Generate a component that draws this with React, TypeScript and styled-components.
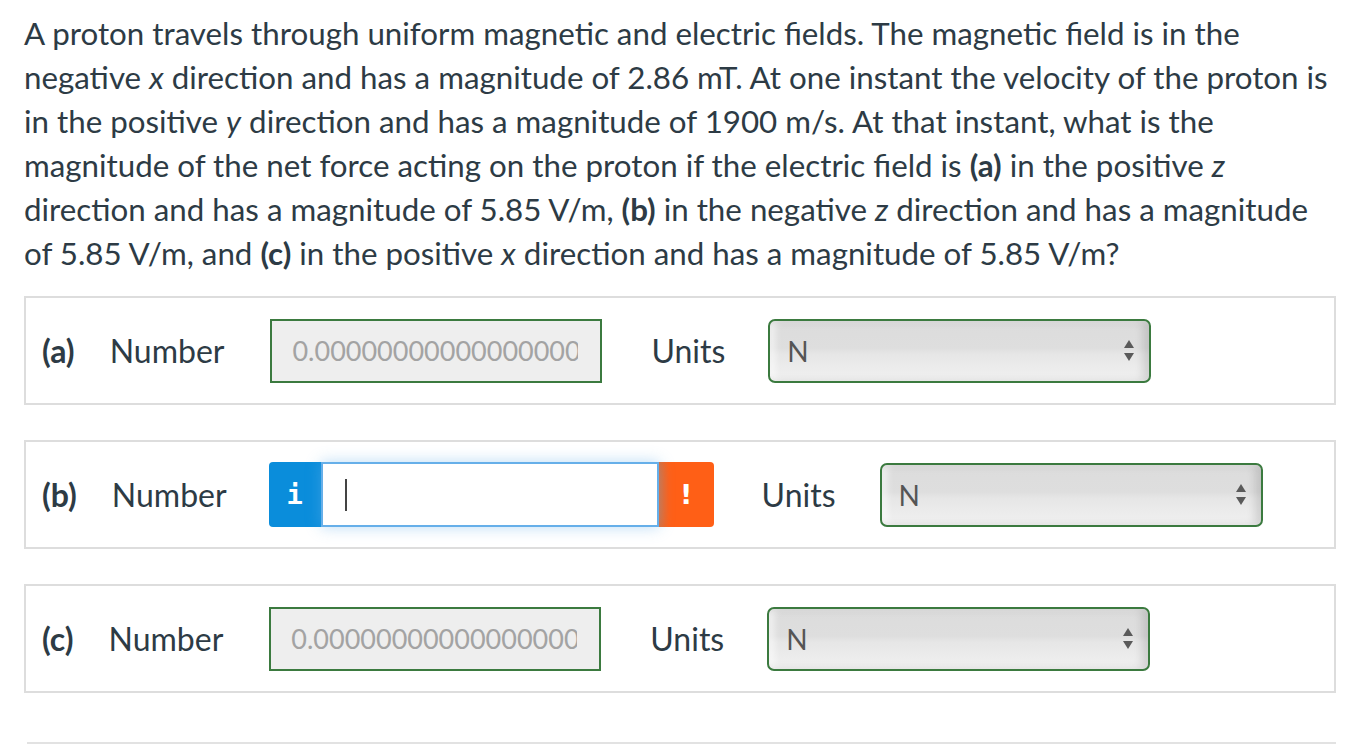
import styled, { createGlobalStyle } from "styled-components";

const GlobalStyle = createGlobalStyle`
  html, body {
    margin: 0;
    padding: 0;
    background: #fff;
  }
  body {
    font-family: Lato, "Open Sans", sans-serif;
    color: #2d3b45;
  }
`;

const Page = styled.div`
  padding: 11px 18px 0 24px;
`;

const Question = styled.p`
  margin: 0 0 21px;
  font-size: 31.3px;
  line-height: 44px;
  color: #2d3b45;

  b {
    font-weight: 700;
  }
`;

const Panels = styled.div`
  display: flex;
  flex-direction: column;
  gap: 35px;
`;

const Panel = styled.div`
  display: flex;
  align-items: center;
  height: 109px;
  box-sizing: border-box;
  border: 2px solid #dddddd;
  padding-left: 16px;
`;

const PartLabel = styled.span`
  font-size: 32px;
  font-weight: 700;
  margin-right: 35px;
`;

const FieldLabel = styled.span<{ $gap: number }>`
  font-size: 32px;
  margin-right: ${(p) => p.$gap}px;
`;

const AnswerBox = styled.div`
  width: 332px;
  height: 64px;
  box-sizing: border-box;
  border: 2px solid #3b7a3f;
  background: #eeeeee;
  color: #a3a3a3;
  font-size: 27px;
  padding: 0 0 0 20px;
  display: flex;
  align-items: center;
  overflow: hidden;
  white-space: nowrap;
  margin-right: 49px;
`;

const Clip = styled.span`
  display: block;
  width: 286px;
  overflow: hidden;
`;

const InputGroup = styled.div`
  display: flex;
  height: 65px;
  margin-right: 48px;
`;

const InfoButton = styled.div`
  width: 52px;
  background: #0a8ddb;
  border-radius: 4px 0 0 4px;
  display: flex;
  align-items: center;
  justify-content: center;
  color: #fff;
  font-family: "DejaVu Sans Mono", "Liberation Mono", monospace;
  font-weight: 700;
  font-size: 27px;
`;

const FocusInput = styled.div`
  width: 338px;
  box-sizing: border-box;
  border: 2px solid #66afe9;
  background: #fff;
  box-shadow: 0 0 14px rgba(102, 175, 233, 0.45);
  display: flex;
  align-items: center;
  padding-left: 22px;
  position: relative;
  z-index: 1;
`;

const Caret = styled.span`
  display: block;
  width: 2px;
  height: 32px;
  background: #444;
`;

const AlertButton = styled.div`
  width: 55px;
  background: linear-gradient(to right, #e0692f 0px, #ff5f16 10px, #ff5f16 100%);
  border-radius: 0 4px 4px 0;
  display: flex;
  align-items: center;
  justify-content: center;
  color: #fff;
  font-family: "DejaVu Sans", sans-serif;
  font-weight: 700;
  font-size: 27px;
`;

const Select = styled.div`
  width: 383px;
  height: 64px;
  box-sizing: border-box;
  border: 2px solid #3b7a3f;
  border-radius: 7px;
  background: linear-gradient(to bottom, #dcdcdc 0%, #dedede 45%, #e6e6e6 55%, #f1f1f1 100%);
  box-shadow: inset -6px 0 8px rgba(0, 0, 0, 0.12), inset 6px 0 6px rgba(255, 255, 255, 0.5);
  display: flex;
  align-items: center;
  justify-content: space-between;
  padding: 0 14px 0 17px;
  color: #555;
  font-size: 28px;
`;

const Divider = styled.div`
  margin: 49px 0 0 3px;
  border-top: 2px solid #e2e2e2;
`;

const Arrows = () => (
  <svg width="12" height="24" viewBox="0 0 12 24">
    <polygon points="6,1 11,9 1,9" fill="#5a5a5a" />
    <polygon points="1,14 11,14 6,22" fill="#5a5a5a" />
  </svg>
);

const UnitsSelect = () => (
  <Select>
    <span>N</span>
    <Arrows />
  </Select>
);

const value = "0.000000000000000000000000";

export default function App() {
  return (
    <>
      <GlobalStyle />
      <Page>
        <Question>
          A proton travels through uniform magnetic and electric fields. The magnetic field is in the
          negative <i>x</i> direction and has a magnitude of 2.86 mT. At one instant the velocity of the proton is
          in the positive <i>y</i> direction and has a magnitude of 1900 m/s. At that instant, what is the
          magnitude of the net force acting on the proton if the electric field is <b>(a)</b> in the positive <i>z</i>{" "}
          direction and has a magnitude of 5.85 V/m, <b>(b)</b> in the negative <i>z</i> direction and has a magnitude
          of 5.85 V/m, and <b>(c)</b> in the positive <i>x</i> direction and has a magnitude of 5.85 V/m?
        </Question>
        <Panels>
          <Panel>
            <PartLabel>(a)</PartLabel>
            <FieldLabel $gap={46}>Number</FieldLabel>
            <AnswerBox>
              <Clip>{value}</Clip>
            </AnswerBox>
            <FieldLabel $gap={43}>Units</FieldLabel>
            <UnitsSelect />
          </Panel>
          <Panel>
            <PartLabel>(b)</PartLabel>
            <FieldLabel $gap={42}>Number</FieldLabel>
            <InputGroup>
              <InfoButton>i</InfoButton>
              <FocusInput>
                <Caret />
              </FocusInput>
              <AlertButton>!</AlertButton>
            </InputGroup>
            <FieldLabel $gap={44}>Units</FieldLabel>
            <UnitsSelect />
          </Panel>
          <Panel>
            <PartLabel>(c)</PartLabel>
            <FieldLabel $gap={46}>Number</FieldLabel>
            <AnswerBox>
              <Clip>{value}</Clip>
            </AnswerBox>
            <FieldLabel $gap={43}>Units</FieldLabel>
            <UnitsSelect />
          </Panel>
        </Panels>
        <Divider />
      </Page>
    </>
  );
}
